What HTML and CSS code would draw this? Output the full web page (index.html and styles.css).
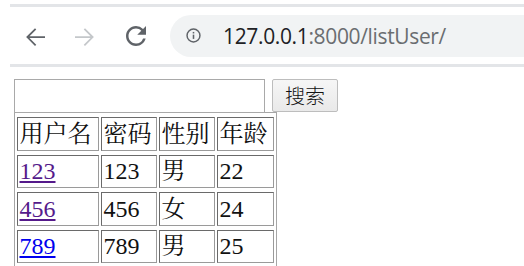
FILE: index.html
```html
<!DOCTYPE html>
<html lang="zh-CN">
<head>
<meta charset="utf-8">
<title>listUser</title>
<link rel="stylesheet" href="styles.css">
</head>
<body>
<div class="chrome">
  <div class="toolbar">
    <span class="nav-btn back">
      <svg width="30" height="30" viewBox="0 0 24 24"><path d="M20 11.3H7.6l5.4-5.4-1-1L4.9 12l7.1 7.1 1-1-5.4-5.4H20v-1.4z" fill="#5f6368"/></svg>
    </span>
    <span class="nav-btn fwd">
      <svg width="30" height="30" viewBox="0 0 24 24"><path d="M4 11.3h12.4L11 5.9l1-1 7.1 7.1-7.1 7.1-1-1 5.4-5.4H4v-1.4z" fill="#c4c7ca"/></svg>
    </span>
    <span class="nav-btn reload">
      <svg width="30" height="30" viewBox="0 0 24 24"><path d="M17.65 6.35A7.958 7.958 0 0 0 12 4c-4.42 0-7.99 3.58-7.99 8s3.57 8 7.99 8c3.73 0 6.84-2.55 7.73-6h-2.08A5.99 5.99 0 0 1 12 18c-3.31 0-6-2.69-6-6s2.69-6 6-6c1.66 0 3.14.69 4.22 1.78L13 11h7V4l-2.35 2.35z" fill="#5f6368"/></svg>
    </span>
    <div class="omnibox">
      <svg class="info" width="17" height="17" viewBox="0 0 20 20"><circle cx="10" cy="10" r="7.6" fill="none" stroke="#5f6368" stroke-width="1.7"/><rect x="9.1" y="9" width="1.8" height="5" fill="#5f6368"/><rect x="9.1" y="5.8" width="1.8" height="1.8" fill="#5f6368"/></svg>
      <span class="url"><span class="host">127.0.0.1</span><span class="path">:8000/listUser/</span></span>
    </div>
  </div>
</div>
<div class="page">
  <form class="search">
    <input class="search-input" type="text"><button class="search-btn" type="button">搜索</button>
  </form>
  <table class="users">
    <tr><td class="c1">用户名</td><td class="c2">密码</td><td class="c3">性别</td><td class="c4">年龄</td></tr>
    <tr><td><a class="visited" href="#">123</a></td><td>123</td><td>男</td><td>22</td></tr>
    <tr><td><a class="visited" href="#">456</a></td><td>456</td><td>女</td><td>24</td></tr>
    <tr><td><a class="link" href="#">789</a></td><td>789</td><td>男</td><td>25</td></tr>
  </table>
</div>
</body>
</html>
```

FILE: styles.css
```css
html, body {
  margin: 0;
  padding: 0;
  background: #fff;
  overflow: hidden;
}
body {
  width: 524px;
  height: 266px;
}
.chrome {
  margin: 4px 0 0 10px;
  border-top: 3px solid #e3e5e8;
  border-bottom: 3px solid #e3e5e8;
  height: 57px;
  box-sizing: content-box;
}
.toolbar {
  display: flex;
  align-items: center;
  height: 57px;
}
.nav-btn {
  display: flex;
  align-items: center;
  justify-content: center;
  width: 30px;
  height: 30px;
  margin-top: 2px;
}
.back { margin-left: 10px; }
.fwd { margin-left: 20px; }
.reload { margin-left: 21px; margin-top: 0; }
.omnibox {
  flex: 1;
  margin-left: 19px;
  height: 42px;
  border-radius: 21px 0 0 21px;
  background: #f1f3f4;
  display: flex;
  align-items: center;
  padding-left: 15px;
}
.info { flex: none; }
.url {
  margin-left: 21px;
  font-family: "Open Sans", "Noto Sans", sans-serif;
  font-size: 21px;
  letter-spacing: -0.35px;
  color: #202124;
}
.path { color: #6a6d70; }

.page {
  padding: 12px 0 0 14px;
}
.search {
  display: flex;
  margin: 0;
  gap: 7px;
}
.search-input {
  width: 251px;
  height: 34px;
  box-sizing: border-box;
  border: 1.5px solid #a9a9a9;
  margin: 0;
  padding: 0;
}
.search-btn {
  width: 66px;
  height: 33px;
  box-sizing: border-box;
  border: 1px solid #bdbdbd;
  border-radius: 2px;
  background: linear-gradient(#f6f6f6, #e9e9e9);
  font-family: "Noto Sans CJK SC", sans-serif;
  font-size: 20px;
  font-weight: 300;
  color: #111;
  padding: 0;
  margin: 0;
  line-height: 1;
}
.users {
  margin-top: -1px;
  border: 1.5px solid #a6a6a6;
  border-spacing: 2.5px 4px;
  font-family: "Liberation Serif", "Noto Serif CJK SC", "Noto Sans CJK SC", serif;
  font-size: 24px;
  color: #111;
}
.users td {
  border: 1.5px solid #6e6e6e;
  border-color: #6a6a6a #9a9a9a #9a9a9a #6a6a6a;
  height: 33.5px;
  box-sizing: border-box;
  padding: 0 1.5px;
  line-height: 28px;
  vertical-align: middle;
}
.c1 { width: 82px; }
.c2 { width: 56px; }
.c3 { width: 56px; }
.c4 { width: 57px; }
.users a { text-decoration: underline; }
.visited { color: #551a8b; }
.link { color: #0000ee; }
```
